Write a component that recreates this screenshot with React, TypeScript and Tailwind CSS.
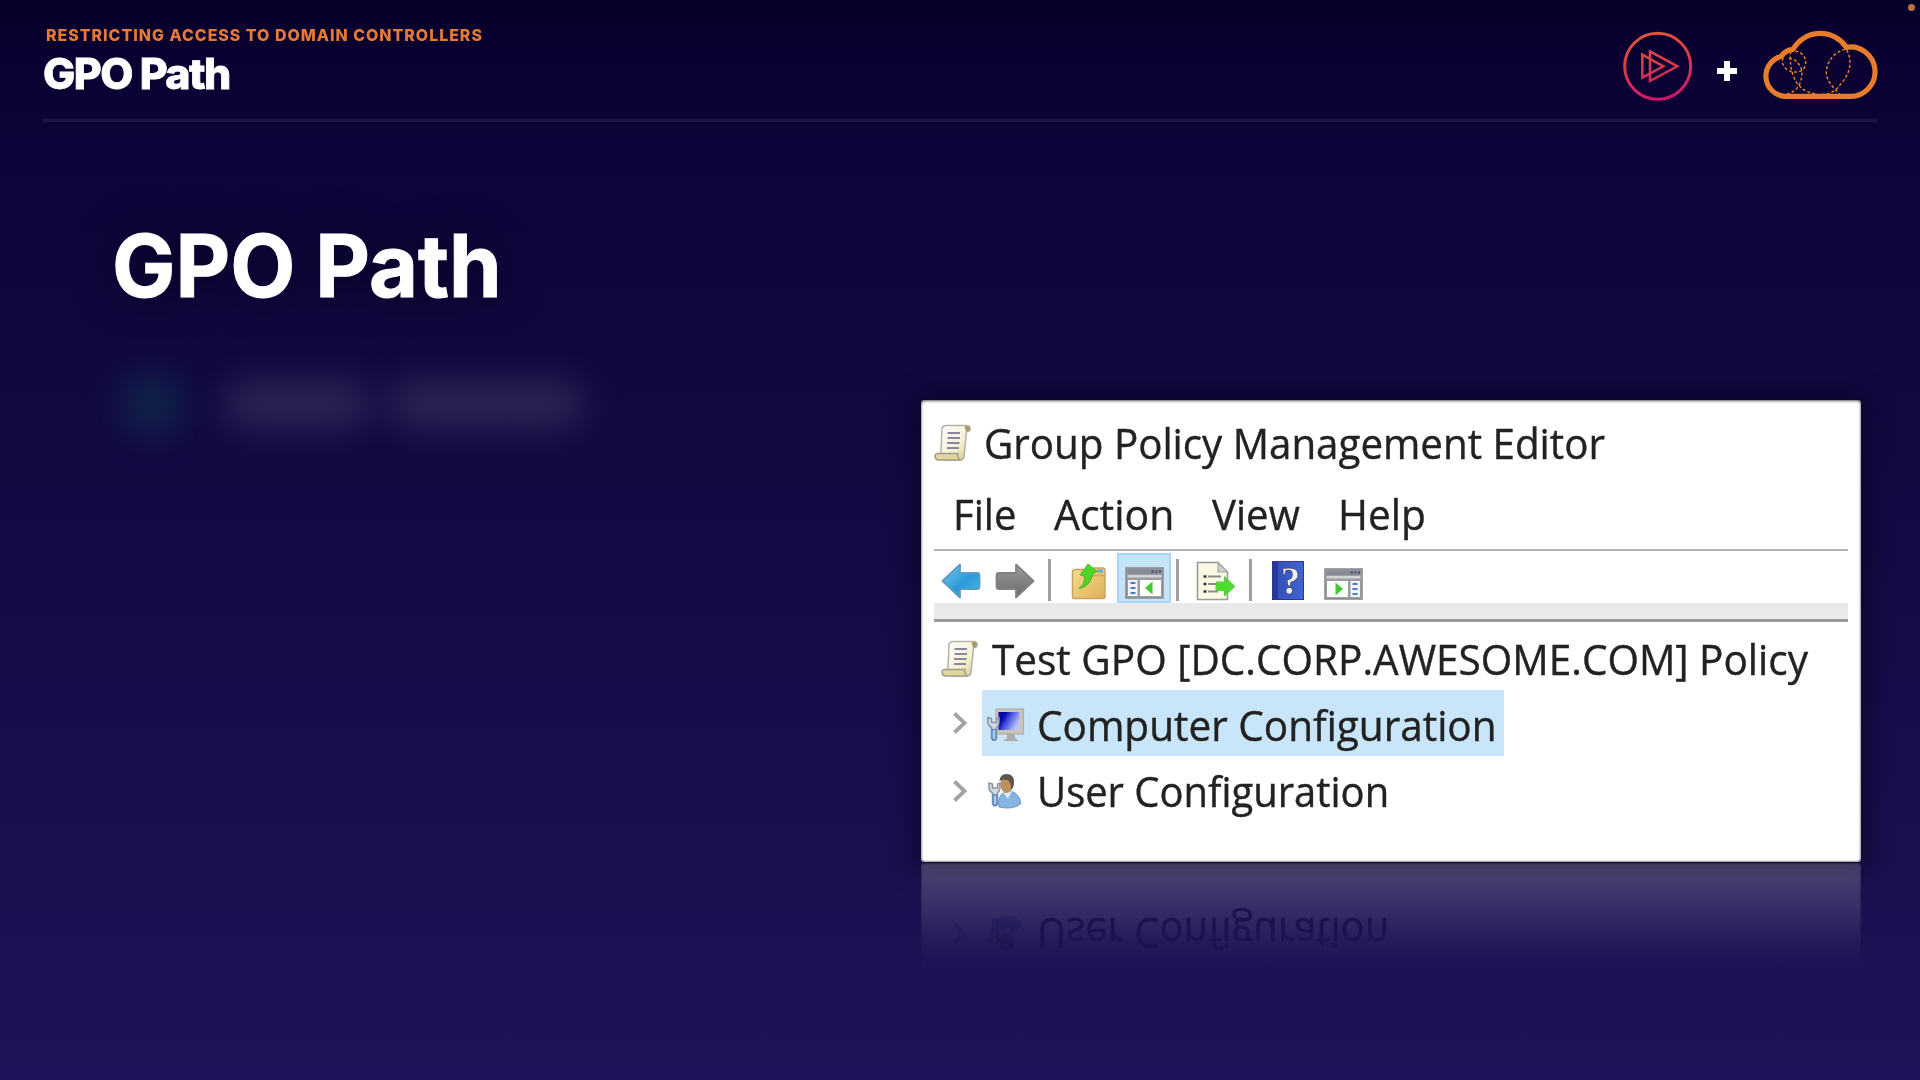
import { useLayoutEffect, useRef, useState, type ReactNode } from "react";

function FitText({ width, className = "", children }: { width: number; className?: string; children: ReactNode }) {
  const ref = useRef<HTMLSpanElement>(null);
  const [scale, setScale] = useState(1);
  useLayoutEffect(() => {
    if (ref.current) setScale(width / ref.current.offsetWidth);
  }, [width]);
  return (
    <span className="block shrink-0" style={{ width }}>
      <span
        ref={ref}
        className={`inline-block origin-left whitespace-nowrap ${className}`}
        style={{ transform: `scaleX(${scale})` }}
      >
        {children}
      </span>
    </span>
  );
}

function PlayLogo() {
  return (
    <svg className="h-[70px] w-[70px] shrink-0" viewBox="0 0 210 210" fill="none">
      <defs>
        <linearGradient id="play" gradientUnits="userSpaceOnUse" x1="70" y1="0" x2="110" y2="210">
          <stop offset="0" stopColor="#e4553a" />
          <stop offset="0.5" stopColor="#d73a4a" />
          <stop offset="1" stopColor="#d0166e" />
        </linearGradient>
      </defs>
      <g stroke="url(#play)">
        <circle cx="104" cy="106" r="99" strokeWidth="9" />
        <path d="M81 61 L163 106 L81 150 Z" strokeWidth="7.500" />
        <path d="M58 71 L121 106 L58 140 Z" strokeWidth="7.500" />
      </g>
    </svg>
  );
}

function CloudLogo() {
  return (
    <svg className="h-[78px] w-[124px] shrink-0" viewBox="0 0 372 234" fill="none" stroke="#e67c2c">
      <path
        d="M80 211 A61 61 0 0 1 70 91 Q82 72 105 70 A94 94 0 0 1 265 64 A74 74 0 1 1 277 211 Z"
        strokeWidth="15.500"
        strokeLinejoin="round"
      />
      <g strokeWidth="4.500" strokeDasharray="9 6.5">
        <path d="M112 76 C140 78 152 108 136 130 C120 145 82 140 74 112 C72 104 74 98 76 92" />
        <path d="M93 98 C108 96 124 110 131 132 C135 165 120 198 84 205" />
        <path d="M98 76 C94 112 101 146 116 170 C130 190 150 202 176 204" />
        <path d="M262 70 C225 78 203 112 205 145 C210 172 230 188 246 206" />
        <path d="M266 72 C285 105 275 145 250 172 C236 192 220 204 194 205" />
      </g>
    </svg>
  );
}

function ScrollIcon() {
  return (
    <svg className="h-[38px] w-[38px] shrink-0" viewBox="0 0 38 38">
      <defs>
        <linearGradient id="paper" x1="0" y1="0" x2="1" y2="1">
          <stop offset="0" stopColor="#ffffff" />
          <stop offset="0.6" stopColor="#f4f0d4" />
          <stop offset="1" stopColor="#cdbd72" />
        </linearGradient>
      </defs>
      <path d="M8 4 Q9 1.500 12 1.500 H33 Q37 2 36 6 Q35 8 32.500 7.500 L30 33 Q29 36 26 36 H10 L7 28 Z" fill="url(#paper)" stroke="#b5b2a8" strokeWidth="1.500" />
      <path d="M30.500 2.500 Q36 1 36 5 Q35.500 8 32 7.500 Z" fill="#a89b66" />
      <path d="M3 29.500 H24 Q22.500 32 26 36 H4 Q1 35.500 1 32 Q1 30 3 29.500 Z" fill="#e0d69f" stroke="#a39d84" strokeWidth="1.500" />
      <path d="M13.500 9 H26 M13.500 14 H26 M13 19 H25.500 M13 24 H25" stroke="#8e86a0" strokeWidth="2" />
    </svg>
  );
}

function ArrowIcon({ forward = false }: { forward?: boolean }) {
  return (
    <svg className={forward ? "h-9 w-10 shrink-0 -scale-x-100" : "h-9 w-10 shrink-0"} viewBox="0 0 40 36">
      <defs>
        <linearGradient id="blueArrow" x1="0" y1="0" x2="1" y2="1">
          <stop offset="0" stopColor="#7ccdf2" />
          <stop offset="0.55" stopColor="#2a9ad8" />
          <stop offset="1" stopColor="#46b8ea" />
        </linearGradient>
        <linearGradient id="grayArrow" x1="0" y1="0" x2="0" y2="1">
          <stop offset="0" stopColor="#9a9a9a" />
          <stop offset="1" stopColor="#6c6c6c" />
        </linearGradient>
      </defs>
      <path
        d="M1.500 18 L19 1.500 V10 H36 Q38.500 10 38.500 12.500 V23.500 Q38.500 26 36 26 H19 V34.500 Z"
        fill={forward ? "url(#grayArrow)" : "url(#blueArrow)"}
        stroke={forward ? "#808080" : "#5a9dc0"}
        strokeWidth="1.800"
        strokeLinejoin="round"
      />
    </svg>
  );
}

function FolderIcon() {
  return (
    <svg className="h-[38px] w-9 shrink-0" viewBox="0 0 36 38">
      <defs>
        <linearGradient id="folder" x1="0" y1="0" x2="1" y2="1">
          <stop offset="0" stopColor="#f6dc90" />
          <stop offset="1" stopColor="#ddb057" />
        </linearGradient>
      </defs>
      <path d="M1.500 9 Q2 7.500 4 7.500 H20 L23 6 H32 Q34 6 34 9 V35 Q34 36.500 32.500 36.500 H2.500 Q1.500 36.500 1.500 35 Z" fill="url(#folder)" stroke="#c6a463" strokeWidth="1.500" />
      <rect x="26" y="7.500" width="6" height="3" fill="#5fb2c9" />
      <path d="M10 13.500 H33" stroke="#c9a45a" strokeWidth="1.300" />
      <path d="M8 26 Q14 23 13.500 14 L9 13 L17 2 L26 9.500 L21.500 12 Q20 23 9.500 26.500 Z" fill="#4fd428" stroke="#4fb52f" strokeWidth="1" />
    </svg>
  );
}

function ConsoleIcon({ mirrored = false }: { mirrored?: boolean }) {
  return (
    <svg className="h-8 w-[39px] shrink-0" viewBox="0 0 39 32">
      <rect x="1" y="1" width="37" height="30" fill="#9b9da3" stroke="#8b8e93" strokeWidth="1.600" />
      <rect x="2.500" y="2.500" width="34" height="4.500" fill="#858a93" />
      <path d="M26.500 4.500 H29 M30.500 4.500 H32.500 M34 4.500 H36" stroke="#4d5a78" strokeWidth="2.400" />
      <rect x="2.500" y="8" width="34" height="2.500" fill="#d4d4d6" />
      <g transform={mirrored ? "translate(39 0) scale(-1 1)" : undefined}>
        <rect x="3" y="13" width="9.500" height="16" fill="#f2f4f8" />
        <rect x="15" y="13" width="21" height="16" fill="#ffffff" />
        <path d="M5.500 16 H10.500 M5.500 21 H10.500 M5.500 26 H10.500" stroke="#4b7fc4" strokeWidth="2.200" />
        <path d="M20 21 L27.500 14.500 V27.500 Z" fill="#3ecb2c" />
      </g>
    </svg>
  );
}

function ExportIcon() {
  return (
    <svg className="h-10 w-10 shrink-0" viewBox="0 0 40 40">
      <path d="M1.500 1.500 H22 L31.500 11 V38.500 H1.500 Z" fill="#fbf9e4" stroke="#9b9b94" strokeWidth="1.600" />
      <path d="M22 1.500 V11 H31.500 Z" fill="#cfcfcf" stroke="#a9a9a9" strokeWidth="1.200" />
      <path d="M12 15.500 H25 M12 23 H20 M12 30.500 H22" stroke="#8b8b8b" strokeWidth="2" />
      <path d="M7.500 15.500 H10.500 M7.500 23 H10.500 M7.500 30.500 H10.500" stroke="#333333" strokeWidth="2.400" />
      <path d="M20 21 H28.500 V15.500 L39 25.500 L28.500 35 V29.500 H20 Z" fill="#4fdc32" stroke="#62c84e" strokeWidth="1" />
    </svg>
  );
}

function HelpIcon() {
  return (
    <span className="flex h-[39px] w-8 shrink-0 items-center justify-center border border-l-[6px] border-[#27379b] bg-gradient-to-r from-[#3450bd] to-[#4265cf] font-['Liberation_Serif',serif] text-[39px] leading-none font-bold text-[#eeeef8]">
      ?
    </span>
  );
}

function Wrench() {
  return (
    <g>
      <path d="M2 9 V15 Q3 18 5.500 19 V30 Q7.500 34 10.500 30 V19 Q13 17 13 14 V9 L10.500 10 V14 H5.500 V10 Z" fill="#d2dae2" stroke="#8a949e" strokeWidth="1.500" />
      <path d="M6 21 H10 V30 Q8 33 6 30 Z" fill="#a8cdf0" stroke="#6287b8" strokeWidth="1.500" />
    </g>
  );
}

function ComputerIcon() {
  return (
    <svg className="h-9 w-10 shrink-0" viewBox="0 0 40 36">
      <defs>
        <linearGradient id="screen" x1="0" y1="0" x2="1" y2="0.5">
          <stop offset="0.3" stopColor="#0a08a8" />
          <stop offset="0.5" stopColor="#3d45da" />
          <stop offset="1" stopColor="#b7c3fa" />
        </linearGradient>
      </defs>
      <path d="M21 26 H29 V31 L33 34 H17 L21 31 Z" fill="#a9adac" />
      <rect x="10" y="2" width="27.500" height="25" fill="#c7c4bc" stroke="#b3afa6" strokeWidth="1.200" />
      <rect x="12.500" y="5" width="21" height="18" fill="url(#screen)" />
      <g transform="translate(0 1.500)"><Wrench /></g>
    </svg>
  );
}

function UserIcon() {
  return (
    <svg className="h-9 w-10 shrink-0" viewBox="0 0 40 36">
      <path d="M13 34 Q11 21 20 19 L25 18 Q35 22 34.500 31 Q27 37 13 34 Z" fill="#86b4e2" stroke="#6d98c8" strokeWidth="1" />
      <path d="M17.500 20 L22 26 L26 18 Z" fill="#dfeaf5" />
      <ellipse cx="20.500" cy="11.500" rx="6" ry="8.500" fill="#bd8f5c" />
      <path d="M13.500 8 Q14 1 20.500 1 Q28 1 28 9 Q28 15 25 17 Q25.500 9 21.500 7 Q17.500 6 13.500 8 Z" fill="#5b554b" />
      <g transform="translate(1 1)"><Wrench /></g>
    </svg>
  );
}

function Chevron() {
  return (
    <svg className="h-[22px] w-4 shrink-0" viewBox="0 0 16 22" fill="none">
      <path d="M1.500 1.500 L11.500 11 L1.500 20.500" stroke="#a3a3a3" strokeWidth="3.800" />
    </svg>
  );
}

const Separator = ({ className = "" }: { className?: string }) => (
  <span className={`h-[42px] w-[3px] shrink-0 bg-[#a0a0a0] ${className}`} />
);

const menus = [
  { label: "File", width: 63 },
  { label: "Action", width: 120 },
  { label: "View", width: 88 },
  { label: "Help", width: 88 },
];

function Editor() {
  return (
    <div className="flex h-[462px] w-[940px] flex-col overflow-hidden rounded-[4px] bg-white px-[13px] font-['Open_Sans','Noto_Sans',sans-serif] text-[42px] leading-[64px] text-[#222222] shadow-[inset_0_1px_3px_#55555a,inset_0_-1px_2px_#aaaaaa] [-webkit-text-stroke:0.4px_#222222]">
      <div className="flex h-[85px] shrink-0 items-center gap-[12px] pt-px">
        <ScrollIcon />
        <FitText width={621}>Group Policy Management Editor</FitText>
      </div>
      <div className="flex h-16 shrink-0 items-center gap-[38px] pb-1.5 pl-[19px]">
        {menus.map((m) => (
          <FitText key={m.label} width={m.width}>{m.label}</FitText>
        ))}
      </div>
      <div className="h-0.5 shrink-0 bg-[#b4b4b4]" />
      <div className="flex h-[52px] shrink-0 items-end pl-[7px]">
        <span className="mb-1"><ArrowIcon /></span>
        <span className="mb-1 ml-[14px]"><ArrowIcon forward /></span>
        <Separator className="mb-0.5 ml-[13px]" />
        <span className="mb-[3px] ml-[20px]"><FolderIcon /></span>
        <span className="ml-[10px] flex h-[50px] w-[54px] items-end justify-center border-2 border-[#a9d6f6] bg-[#c6e4f9] pb-[2px]">
          <ConsoleIcon />
        </span>
        <Separator className="mb-0.5 ml-[5px]" />
        <span className="mb-0.5 ml-[17px]"><ExportIcon /></span>
        <Separator className="mb-0.5 ml-[13px]" />
        <span className="mb-[3px] ml-[20px]"><HelpIcon /></span>
        <span className="mb-[3px] ml-[20px]"><ConsoleIcon mirrored /></span>
      </div>
      <div className="h-4 shrink-0 bg-[#e9e9e9]" />
      <div className="mb-[3px] h-[3px] shrink-0 bg-[#9a9a9a]" />
      <div className="flex h-[65px] shrink-0 items-center gap-[13px] pt-0.5 pl-[7px]">
        <ScrollIcon />
        <FitText width={816}>Test GPO [DC.CORP.AWESOME.COM] Policy</FitText>
      </div>
      <div className="flex h-[66px] shrink-0 items-center gap-[13px] pl-[19px]">
        <Chevron />
        <div className="flex h-[66px] w-[522px] items-center gap-[11px] bg-[#c9e5f9] pt-[3px] pl-[4px]">
          <ComputerIcon />
          <FitText width={460}>Computer Configuration</FitText>
        </div>
      </div>
      <div className="flex h-[66px] shrink-0 items-center pt-[3px] pl-[19px]">
        <Chevron />
        <div className="flex items-center gap-[11px] pl-[17px]">
          <UserIcon />
          <FitText width={352}>User Configuration</FitText>
        </div>
      </div>
    </div>
  );
}

export default function App() {
  return (
    <div className="relative flex h-[1080px] w-[1920px] flex-col overflow-hidden bg-[linear-gradient(180deg,#060029_0px,#0a0031_50px,#0d0439_150px,#120940_420px,#170d4a_700px,#1b1151_900px,#1d1358_1080px)] font-['Inter',sans-serif]">
      <header className="mx-[43px] flex h-[122px] shrink-0 items-start justify-between border-b-[3px] border-[#1e1546]">
        <div className="flex flex-col pt-[23px]">
          <FitText width={437} className="ml-[3px] text-[16px] leading-5 font-extrabold tracking-[1px] text-[#e67a35]">
            RESTRICTING ACCESS TO DOMAIN CONTROLLERS
          </FitText>
          <FitText width={187} className="-mt-px text-[42px] leading-[56px] font-extrabold tracking-[-1.500px] text-white [-webkit-text-stroke:0.8px_white]">
            GPO Path
          </FitText>
        </div>
        <div className="flex items-start">
          <span className="mt-[31px]"><PlayLogo /></span>
          <svg className="mt-[61px] ml-[24px] h-5 w-5" viewBox="0 0 20 20">
            <path d="M7 0 H13 V7 H20 V13 H13 V20 H7 V13 H0 V7 H7 Z" fill="#ffffff" />
          </svg>
          <span className="mt-[26px] -mr-[5px] ml-[21px]"><CloudLogo /></span>
        </div>
      </header>
      <span className="absolute top-1 right-[5px] h-[7px] w-[7px] rounded-full bg-[#bf7040]" />

      <main className="flex flex-1">
        <section className="w-[921px] shrink-0 pt-[89px] pl-[112px]">
          <FitText width={390} className="text-[86px] leading-[110px] font-bold text-white [-webkit-text-stroke:1px_white] [text-shadow:0_0_40px_rgba(5,0,25,0.7)]">
            GPO Path
          </FitText>
          <div className="mt-[45px] flex h-[76px] items-center pl-[8px]">
            <span className="h-[64px] w-[64px] rounded-full bg-[#0d3b55] opacity-55 blur-[18px]" />
            <span className="ml-[40px] h-[42px] w-[146px] rounded-full bg-[#453c68] opacity-60 blur-[18px]" />
            <span className="ml-[18px] h-[42px] w-[196px] rounded-full bg-[#453c68] opacity-60 blur-[18px]" />
          </div>
        </section>
        <section className="pt-[278px]">
          <div className="rounded-[4px] shadow-[0_2px_24px_6px_rgba(8,3,30,0.65)]">
            <div className="[-webkit-box-reflect:below_1px_linear-gradient(transparent_76%,rgba(255,255,255,0.04)_83%,rgba(255,255,255,0.2)_97%)]">
              <Editor />
            </div>
          </div>
        </section>
      </main>
    </div>
  );
}
